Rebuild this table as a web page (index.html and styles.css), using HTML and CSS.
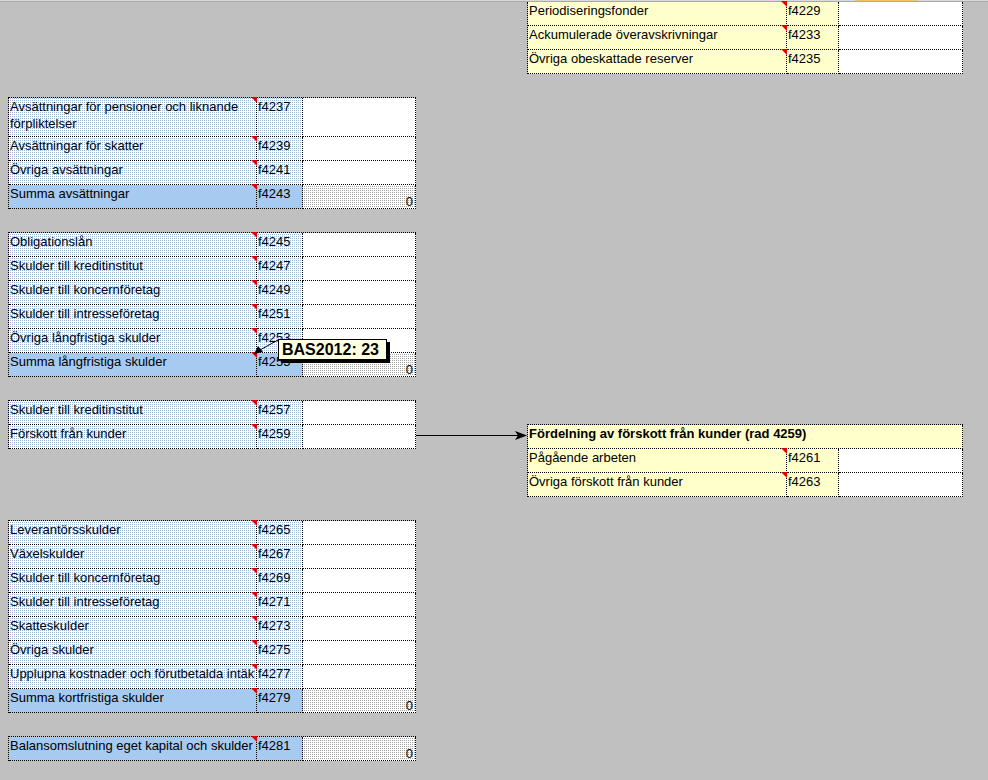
FILE: index.html
```html
<!DOCTYPE html>
<html lang="sv">
<head>
<meta charset="utf-8">
<title>Balansräkning</title>
<link rel="stylesheet" href="styles.css">
</head>
<body>
<div class="strip"><span class="sel"></span></div>
<div class="sheet">
  <div class="col-left">
    <div class="tbl tbl-l">
      <div class="row row-tall"><div class="c lab pat-blue note wrap"><span class="t">Avsättningar för pensioner och liknande förpliktelser</span></div><div class="c code pat-blue">f4237</div><div class="c val"></div></div>
      <div class="row"><div class="c lab pat-blue note"><span class="t">Avsättningar för skatter</span></div><div class="c code pat-blue">f4239</div><div class="c val"></div></div>
      <div class="row"><div class="c lab pat-blue note"><span class="t">Övriga avsättningar</span></div><div class="c code pat-blue">f4241</div><div class="c val"></div></div>
      <div class="row"><div class="c lab sum note"><span class="t">Summa avsättningar</span></div><div class="c code sum">f4243</div><div class="c val pat-gray num">0</div></div>
    </div>
    <div class="tbl tbl-l">
      <div class="row"><div class="c lab pat-blue note"><span class="t">Obligationslån</span></div><div class="c code pat-blue">f4245</div><div class="c val"></div></div>
      <div class="row"><div class="c lab pat-blue note"><span class="t">Skulder till kreditinstitut</span></div><div class="c code pat-blue">f4247</div><div class="c val"></div></div>
      <div class="row"><div class="c lab pat-blue note"><span class="t">Skulder till koncernföretag</span></div><div class="c code pat-blue">f4249</div><div class="c val"></div></div>
      <div class="row"><div class="c lab pat-blue note"><span class="t">Skulder till intresseföretag</span></div><div class="c code pat-blue">f4251</div><div class="c val"></div></div>
      <div class="row"><div class="c lab pat-blue note"><span class="t">Övriga långfristiga skulder</span></div><div class="c code pat-blue">f4253</div><div class="c val"></div></div>
      <div class="row"><div class="c lab sum note"><span class="t">Summa långfristiga skulder</span></div><div class="c code sum">f4255</div><div class="c val pat-gray num">0</div></div>
    </div>
    <div class="tbl tbl-l gap-3">
      <div class="row"><div class="c lab pat-blue note"><span class="t">Skulder till kreditinstitut</span></div><div class="c code pat-blue">f4257</div><div class="c val"></div></div>
      <div class="row"><div class="c lab pat-blue note"><span class="t">Förskott från kunder</span></div><div class="c code pat-blue">f4259</div><div class="c val"></div></div>
    </div>
    <div class="tbl tbl-l">
      <div class="row"><div class="c lab pat-blue note"><span class="t">Leverantörsskulder</span></div><div class="c code pat-blue">f4265</div><div class="c val"></div></div>
      <div class="row"><div class="c lab pat-blue note"><span class="t">Växelskulder</span></div><div class="c code pat-blue">f4267</div><div class="c val"></div></div>
      <div class="row"><div class="c lab pat-blue note"><span class="t">Skulder till koncernföretag</span></div><div class="c code pat-blue">f4269</div><div class="c val"></div></div>
      <div class="row"><div class="c lab pat-blue note"><span class="t">Skulder till intresseföretag</span></div><div class="c code pat-blue">f4271</div><div class="c val"></div></div>
      <div class="row"><div class="c lab pat-blue note"><span class="t">Skatteskulder</span></div><div class="c code pat-blue">f4273</div><div class="c val"></div></div>
      <div class="row"><div class="c lab pat-blue note"><span class="t">Övriga skulder</span></div><div class="c code pat-blue">f4275</div><div class="c val"></div></div>
      <div class="row"><div class="c lab pat-blue note"><span class="t">Upplupna kostnader och förutbetalda intäkter</span></div><div class="c code pat-blue">f4277</div><div class="c val"></div></div>
      <div class="row"><div class="c lab sum note"><span class="t">Summa kortfristiga skulder</span></div><div class="c code sum">f4279</div><div class="c val pat-gray num">0</div></div>
    </div>
    <div class="tbl tbl-l">
      <div class="row"><div class="c lab sum note"><span class="t">Balansomslutning eget kapital och skulder</span></div><div class="c code sum">f4281</div><div class="c val pat-gray num">0</div></div>
    </div>
  </div>

  <div class="col-mid">
    <svg class="link-arrow" width="111" height="11" viewBox="0 0 111 11" aria-hidden="true">
      <line x1="0" y1="5.5" x2="104" y2="5.5" stroke="#000" stroke-width="1"/>
      <path d="M111 5.5 L99 1 L102 5.5 L99 10 Z" fill="#000"/>
    </svg>
  </div>

  <div class="col-right">
    <div class="tbl tbl-r tbl-cut">
      <div class="row"><div class="c lab yellow note"><span class="t">Periodiseringsfonder</span></div><div class="c code yellow">f4229</div><div class="c val"></div></div>
      <div class="row"><div class="c lab yellow note"><span class="t">Ackumulerade överavskrivningar</span></div><div class="c code yellow">f4233</div><div class="c val"></div></div>
      <div class="row"><div class="c lab yellow note"><span class="t">Övriga obeskattade reserver</span></div><div class="c code yellow">f4235</div><div class="c val"></div></div>
    </div>
    <div class="tbl tbl-r tbl-dist">
      <div class="row"><div class="c head yellow"><span class="t">Fördelning av förskott från kunder (rad 4259)</span></div></div>
      <div class="row"><div class="c lab yellow note"><span class="t">Pågående arbeten</span></div><div class="c code yellow">f4261</div><div class="c val"></div></div>
      <div class="row"><div class="c lab yellow note"><span class="t">Övriga förskott från kunder</span></div><div class="c code yellow">f4263</div><div class="c val"></div></div>
    </div>
  </div>
</div>

<svg class="comment-line" width="30" height="20" viewBox="0 0 30 20" aria-hidden="true">
  <line x1="24" y1="1" x2="6" y2="11" stroke="#000" stroke-width="1"/>
  <path d="M0 15 L4 7 L9 13 Z" fill="#000"/>
</svg>
<div class="comment">BAS2012: 23</div>
</body>
</html>
```

FILE: styles.css
```css
html, body {
  margin: 0;
  padding: 0;
}

body {
  background: #c0c0c0;
  font-family: "Liberation Sans", Arial, sans-serif;
  font-size: 13px;
  color: #000;
  width: 988px;
  height: 780px;
  overflow: hidden;
  position: relative;
}

.strip {
  height: 1px;
  background: #dadada;
  border-bottom: 1px solid #a9a9a9;
  display: flex;
}

.strip .sel {
  margin-left: 855px;
  width: 63px;
  background: #f2c463;
}

.sheet {
  display: grid;
  grid-template-columns: 408px 111px 436px;
  padding-left: 8px;
  align-items: start;
}

.col-left {
  padding-top: 95px;
  display: flex;
  flex-direction: column;
  gap: 23px;
}

.col-left .gap-3 {
  margin-bottom: 48px;
}

.col-mid {
  padding-top: 428px;
}

.link-arrow {
  display: block;
}

.col-right {
  display: flex;
  flex-direction: column;
}

.tbl {
  border-top: 1px dotted #000;
  border-left: 1px dotted #000;
}

.tbl-cut {
  border-top: 0;
}

.tbl-dist {
  margin-top: 350px;
}

.row {
  display: grid;
  height: 24px;
  box-sizing: border-box;
}

.row-tall {
  height: 39px;
}

.tbl-l .row {
  grid-template-columns: 248px 46px 113px;
}

.tbl-r .row {
  grid-template-columns: 259px 52px 124px;
}

.c {
  box-sizing: border-box;
  border-right: 1px dotted #000;
  border-bottom: 1px dotted #000;
  line-height: 17px;
  padding: 0 1px;
  white-space: nowrap;
  position: relative;
  min-width: 0;
}

.c .t {
  display: block;
  overflow: hidden;
}

.wrap {
  white-space: normal;
}

.head {
  grid-column: 1 / -1;
  font-weight: bold;
}

.val {
  background: #fff;
}

.num {
  display: flex;
  justify-content: flex-end;
  align-items: flex-end;
  line-height: 13px;
  padding-right: 2px;
}

.pat-blue {
  background-color: #ffffff;
  background-image:
    repeating-linear-gradient(90deg, #ffffff 0 1px, transparent 1px 2px),
    repeating-linear-gradient(0deg, #ffffff 0 1px, #9fb5d2 1px 2px);
}

.pat-gray {
  background-color: #ffffff;
  background-image:
    repeating-linear-gradient(90deg, #ffffff 0 1px, transparent 1px 2px),
    repeating-linear-gradient(0deg, #ffffff 0 1px, #a4a4a4 1px 2px);
}

.sum {
  background: #a6caf0;
}

.yellow {
  background: #ffffcc;
}

.note::after {
  content: "";
  position: absolute;
  top: -1px;
  right: -1px;
  width: 6px;
  height: 6px;
  background: #e00000;
  clip-path: polygon(0 0, 100% 0, 100% 100%);
}

.comment {
  position: absolute;
  left: 278px;
  top: 339px;
  width: 109px;
  height: 21px;
  box-sizing: border-box;
  background: #ffffe1;
  border: 1px solid #000;
  box-shadow: 3px 3px 0 #000;
  font-weight: bold;
  font-size: 16px;
  line-height: 19px;
  padding-left: 3px;
}

.comment-line {
  position: absolute;
  left: 254px;
  top: 339px;
}
```
